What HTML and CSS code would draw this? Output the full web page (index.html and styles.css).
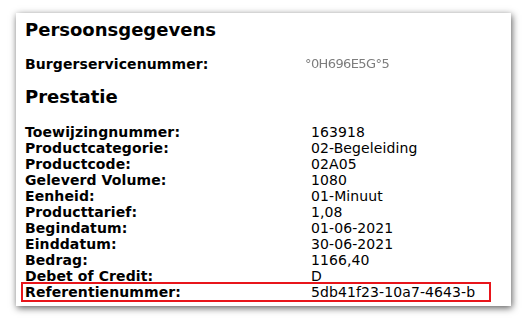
FILE: index.html
```html
<!DOCTYPE html>
<html lang="nl">
<head>
<meta charset="utf-8">
<title>Persoonsgegevens</title>
<link rel="stylesheet" href="styles.css">
</head>
<body>
<div class="page">
  <section class="card">
    <h2 class="title">Persoonsgegevens</h2>
    <div class="row bsn">
      <span class="label">Burgerservicenummer:</span>
      <span class="value masked">°0H696E5G°5</span>
    </div>
    <h2 class="title title-prestatie">Prestatie</h2>
    <div class="rows">
      <div class="row"><span class="label">Toewijzingnummer:</span><span class="value">163918</span></div>
      <div class="row"><span class="label">Productcategorie:</span><span class="value">02-Begeleiding</span></div>
      <div class="row"><span class="label">Productcode:</span><span class="value">02A05</span></div>
      <div class="row"><span class="label">Geleverd Volume:</span><span class="value">1080</span></div>
      <div class="row"><span class="label">Eenheid:</span><span class="value">01-Minuut</span></div>
      <div class="row"><span class="label">Producttarief:</span><span class="value">1,08</span></div>
      <div class="row"><span class="label">Begindatum:</span><span class="value">01-06-2021</span></div>
      <div class="row"><span class="label">Einddatum:</span><span class="value">30-06-2021</span></div>
      <div class="row"><span class="label">Bedrag:</span><span class="value">1166,40</span></div>
      <div class="row"><span class="label">Debet of Credit:</span><span class="value">D</span></div>
      <div class="row highlight"><span class="label">Referentienummer:</span><span class="value">5db41f23-10a7-4643-b</span></div>
    </div>
  </section>
</div>
</body>
</html>
```
FILE: styles.css
```css
html, body {
  margin: 0;
  padding: 0;
  background: #ffffff;
}

body {
  font-family: "DejaVu Sans", Verdana, sans-serif;
  color: #000000;
}

.page {
  width: 527px;
  height: 321px;
  box-sizing: border-box;
  padding: 13px 16px 15px 16px;
}

.card {
  background: #ffffff;
  height: 100%;
  box-sizing: border-box;
  padding: 6px 0 0 9px;
  box-shadow: 1px 2px 7px rgba(0, 0, 0, 0.65);
}

.title {
  margin: 0;
  font-size: 18px;
  line-height: 22px;
  font-weight: bold;
}

.title-prestatie {
  margin-top: 14px;
}

.row {
  display: grid;
  grid-template-columns: 286px auto;
  font-size: 14px;
  line-height: 16px;
  letter-spacing: 0.1px;
}

.bsn {
  margin-top: 15px;
}

.label {
  font-weight: bold;
}

.value {
  font-weight: normal;
}

.masked {
  color: #7d7d7d;
  font-size: 13px;
  letter-spacing: -0.6px;
  margin-left: -6px;
  filter: blur(0.6px);
}

.rows {
  margin-top: 16px;
}

.highlight {
  width: 464px;
  margin-left: -2px;
  padding-left: 2px;
  outline: 2px solid #e8151b;
}
```
